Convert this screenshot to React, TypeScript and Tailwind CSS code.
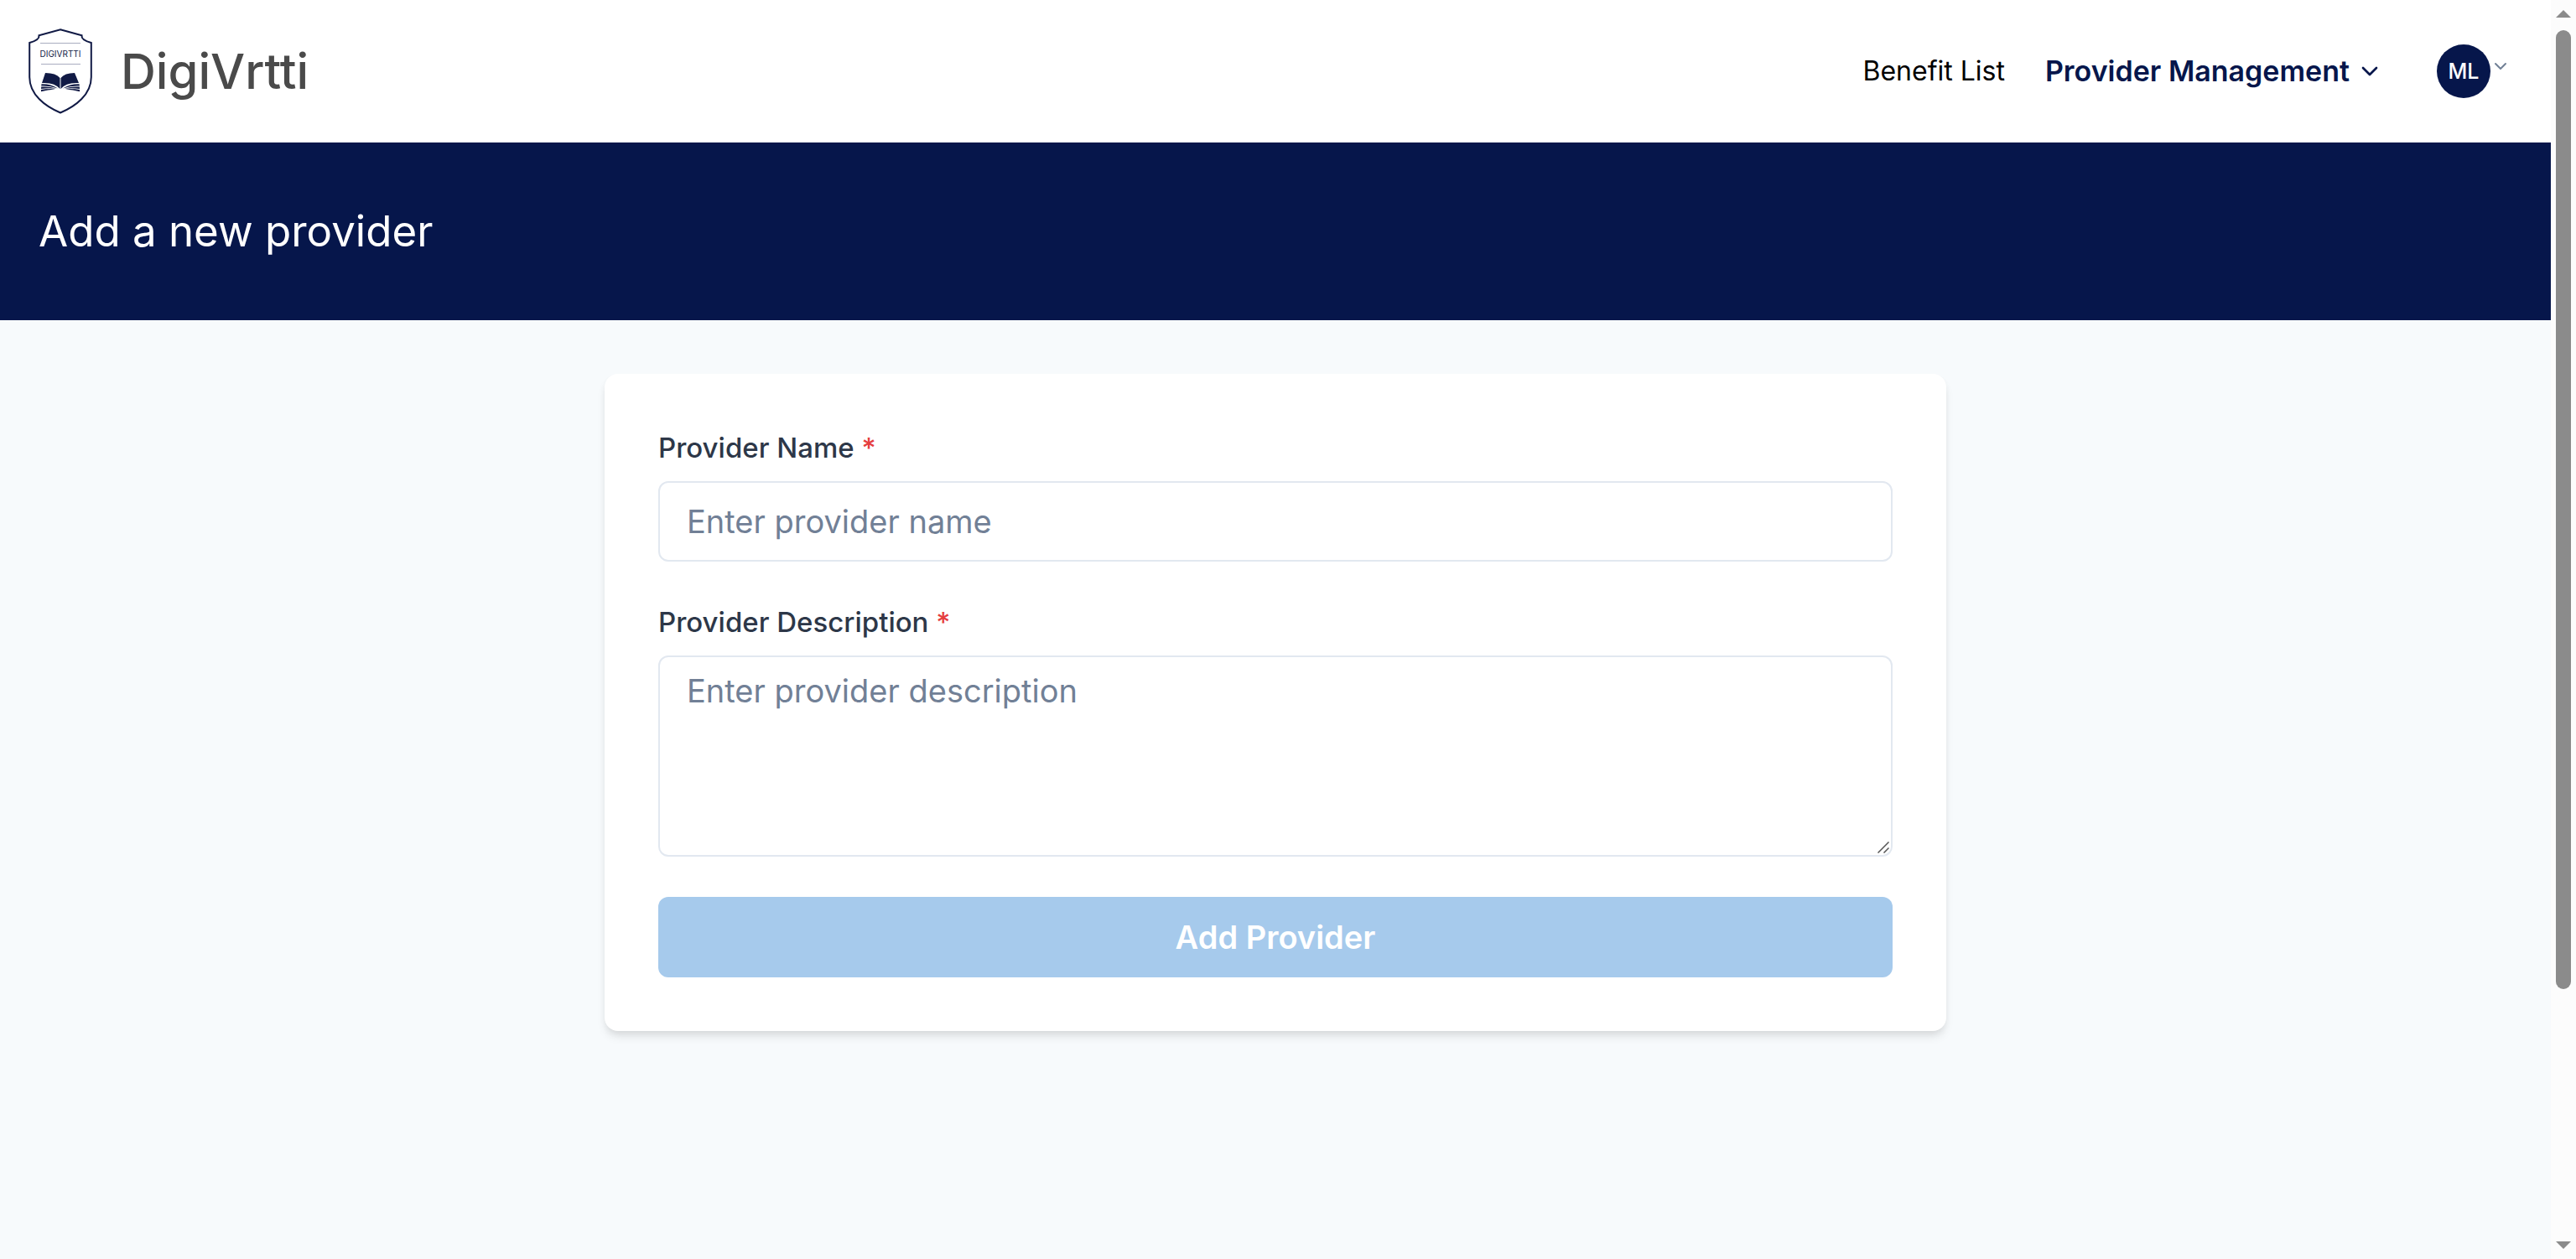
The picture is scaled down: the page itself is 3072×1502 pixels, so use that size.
import { ChevronDown } from "lucide-react";

function Logo() {
  return (
    <svg viewBox="0 0 76 102" className="h-[102px] w-[76px]" fill="none" aria-hidden="true">
      <path
        d="M38 1.200 L63.500 8.200 Q62.500 13.500 74.800 17 V58 C74.800 79 56 93 38 100.500 C20 93 1.200 79 1.200 58 V17 Q13.500 13.500 12.500 8.200 Z"
        stroke="#111a45"
        strokeWidth="2"
      />
      <path d="M14 17.500 H62 M15 42.500 H62" stroke="#a9adc0" strokeWidth="1" />
      <text x="38" y="34" textAnchor="middle" fontSize="10" fill="#111a45" fontFamily="Inter, sans-serif">
        DIGIVRTTI
      </text>
      <g fill="#111a45">
        <path d="M20 53 Q33 53 37.500 59 V72 Q31 64 16 65 Z" />
        <path d="M55 53 Q43 53 38.500 59 V72 Q45 64 60 65 Z" />
        <path d="M15.500 66.200 Q27 66 35 71.500 Q25 68 15.200 68.600 Z" />
        <path d="M60.500 66.200 Q49 66 41 71.500 Q51 68 60.800 68.600 Z" />
        <path d="M15.200 69.600 Q25 69 33 71.800 Q24 70.800 15 72 Z" />
        <path d="M60.800 69.600 Q51 69 43 71.800 Q52 70.800 61 72 Z" />
        <path d="M15 73 Q24 71.500 32 72.400 Q23 73 15 75.200 Z" />
        <path d="M61 73 Q52 71.500 44 72.400 Q53 73 61 75.200 Z" />
      </g>
    </svg>
  );
}

function Header() {
  return (
    <header className="flex h-[170px] items-center justify-between bg-white pr-12 pl-[34px]">
      <a href="#" className="flex items-center gap-[34px]">
        <Logo />
        <span className="text-[58px] leading-[84px] font-medium text-[#4a4a4a]">DigiVrtti</span>
      </a>
      <nav className="flex items-center text-[32px] leading-[48px]">
        <a href="#" className="mr-12 text-black">
          Benefit List
        </a>
        <button type="button" className="mr-16 flex items-center gap-2 text-[34px] font-semibold text-[#06164b]">
          Provider Management
          <ChevronDown size={32} strokeWidth={2} />
        </button>
        <button type="button" aria-label="Account menu" className="flex items-start">
          <span className="flex size-16 items-center justify-center rounded-full bg-[#06164b] text-[25px] font-medium text-white">
            ML
          </span>
          <ChevronDown size={24} strokeWidth={2} className="mt-[14px] text-[#718096]" />
        </button>
      </nav>
    </header>
  );
}

function ProviderForm() {
  return (
    <form className="mx-auto flex w-full max-w-[1600px] flex-col gap-12 rounded-2xl bg-white p-16 shadow-[0_8px_12px_-2px_rgba(0,0,0,0.1),0_4px_8px_-2px_rgba(0,0,0,0.06)]">
      <div className="flex flex-col gap-4">
        <label htmlFor="provider-name" className="text-[33px] leading-[48px] font-medium text-[#2d3748]">
          Provider Name <span className="text-[#e53e3e]">*</span>
        </label>
        <input
          id="provider-name"
          type="text"
          placeholder="Enter provider name"
          className="h-24 w-full rounded-xl border-2 border-[#e2e8f0] px-8 text-[38px] placeholder:text-[#718096]"
        />
      </div>
      <div className="flex flex-col gap-4">
        <label htmlFor="provider-description" className="text-[33px] leading-[48px] font-medium text-[#2d3748]">
          Provider Description <span className="text-[#e53e3e]">*</span>
        </label>
        <div className="relative flex">
          <textarea
            id="provider-description"
            placeholder="Enter provider description"
            className="h-60 w-full resize-none rounded-xl border-2 border-[#e2e8f0] px-8 py-4 text-[38px] leading-[48px] placeholder:text-[#718096]"
          />
          <svg
            viewBox="0 0 14 14"
            className="pointer-events-none absolute right-1 bottom-1 size-3.5"
            stroke="#555555"
            strokeWidth="1.5"
            aria-hidden="true"
          >
            <path d="M0.500 13.500 L13.500 0.500 M7.500 13.500 L13.500 7.500" />
          </svg>
        </div>
      </div>
      <button type="submit" disabled className="h-24 rounded-xl bg-[#a6caec] text-[38px] font-semibold text-white">
        Add Provider
      </button>
    </form>
  );
}

function ScrollTrack() {
  return (
    <div className="flex w-[30px] shrink-0 flex-col items-center bg-[#fcfcfc] py-3" aria-hidden="true">
      <svg viewBox="0 0 18 9" className="h-[9px] w-[18px] shrink-0" fill="#8b8b8b">
        <path d="M0 9 L9 0 L18 9 Z" />
      </svg>
      <div className="flex w-[18px] flex-1 flex-col py-[15px]">
        <div className="h-[80%] rounded-full bg-[#8b8b8b]" />
      </div>
      <svg viewBox="0 0 18 9" className="h-[9px] w-[18px] shrink-0" fill="#8b8b8b">
        <path d="M0 0 L9 9 L18 0 Z" />
      </svg>
    </div>
  );
}

export default function App() {
  return (
    <div className="flex min-h-screen font-[Inter,sans-serif]">
      <div className="flex min-w-0 flex-1 flex-col bg-[#f7fafc]">
        <Header />
        <div className="bg-[#06164b] px-[46px] py-[70px]">
          <h1 className="text-[51px] leading-[72px] text-white">Add a new provider</h1>
        </div>
        <main className="flex-1 py-16">
          <ProviderForm />
        </main>
      </div>
      <ScrollTrack />
    </div>
  );
}
